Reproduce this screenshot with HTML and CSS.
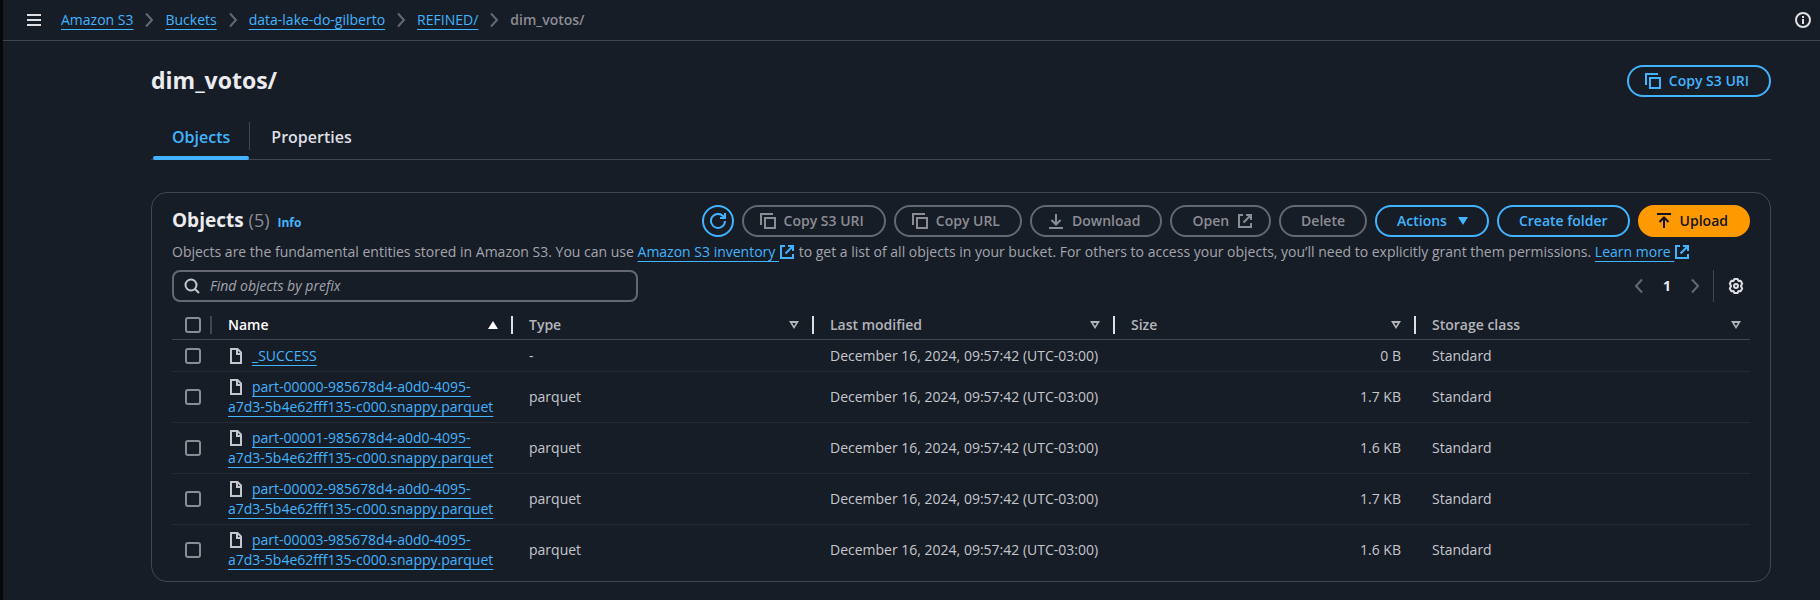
FILE: index.html
```html
<!DOCTYPE html>
<html lang="en">
<head>
<meta charset="utf-8">
<meta name="viewport" content="width=device-width, initial-scale=1">
<title>dim_votos/ - Amazon S3</title>
<link rel="stylesheet" href="styles.css">
</head>
<body>
<svg class="sprite" aria-hidden="true">
  <symbol id="copy" viewBox="0 0 16 16"><path d="M1 12V1h12M5 5h10v10H5z"/></symbol>
  <symbol id="external" viewBox="0 0 16 16"><path d="M6 2H2v12h12v-4M9 2h5v5M14 2 6.500 9.500"/></symbol>
  <symbol id="refresh" viewBox="0 0 16 16"><path d="M10 5h5V0M15 8a7 7 0 1 1-2-5l2 2"/></symbol>
  <symbol id="download" viewBox="0 0 16 16"><path d="M1 15h14M8 1v10M3.500 7 8 11.500 12.500 7"/></symbol>
  <symbol id="upload" viewBox="0 0 16 16"><path d="M1 1h14M8 15V5M3.500 9 8 4.500 12.500 9"/></symbol>
  <symbol id="file" viewBox="0 0 16 16"><path d="M3 1h6.500L13 4.500V15H3zM9 1v5h4"/></symbol>
  <symbol id="next" viewBox="0 0 16 16"><path d="M5 1.500 11 8 5 14.500"/></symbol>
  <symbol id="prev" viewBox="0 0 16 16"><path d="M11 1.500 5 8 11 14.500"/></symbol>
  <symbol id="down" viewBox="0 0 16 16"><path d="M3 4h10l-5 8z"/></symbol>
  <symbol id="sort" viewBox="0 0 16 16"><path fill-rule="evenodd" d="M3 4h10l-5 8zM6.200 6 8 9l1.800-3z"/></symbol>
</svg>

<header class="topbar">
  <button class="icon-button" aria-label="Open navigation"><svg class="icon"><path d="M1 3h14M1 8h14M1 13h14"/></svg></button>
  <nav class="crumbs" aria-label="Breadcrumbs">
    <a href="#">Amazon S3</a><svg class="icon"><use href="#next"/></svg>
    <a href="#">Buckets</a><svg class="icon"><use href="#next"/></svg>
    <a href="#">data-lake-do-gilberto</a><svg class="icon"><use href="#next"/></svg>
    <a href="#">REFINED/</a><svg class="icon"><use href="#next"/></svg>
    <span class="current">dim_votos/</span>
  </nav>
  <button class="icon-button" aria-label="Open info panel"><svg class="icon"><circle cx="8" cy="8" r="7"/><path d="M8 7v5M8 4v2"/></svg></button>
</header>

<main class="content">
  <div class="title-row">
    <h1>dim_votos/</h1>
    <button class="button"><svg class="icon"><use href="#copy"/></svg>Copy S3 URI</button>
  </div>

  <div class="tabs" role="tablist">
    <button class="tab active" role="tab" aria-selected="true">Objects</button>
    <button class="tab" role="tab" aria-selected="false">Properties</button>
  </div>

  <section class="panel">
    <div class="panel-head">
      <h2>Objects <span class="count">(5)</span> <a class="info" href="#">Info</a></h2>
      <div class="actions">
        <button class="button round" aria-label="Refresh"><svg class="icon"><use href="#refresh"/></svg></button>
        <button class="button" disabled><svg class="icon"><use href="#copy"/></svg>Copy S3 URI</button>
        <button class="button" disabled><svg class="icon"><use href="#copy"/></svg>Copy URL</button>
        <button class="button" disabled><svg class="icon"><use href="#download"/></svg>Download</button>
        <button class="button icon-end" disabled>Open<svg class="icon"><use href="#external"/></svg></button>
        <button class="button" disabled>Delete</button>
        <button class="button icon-end">Actions<svg class="icon filled"><use href="#down"/></svg></button>
        <button class="button">Create folder</button>
        <button class="button primary"><svg class="icon"><use href="#upload"/></svg>Upload</button>
      </div>
    </div>
    <p class="description">Objects are the fundamental entities stored in Amazon S3. You can use <a href="#">Amazon S3 inventory <svg class="icon"><use href="#external"/></svg></a> to get a list of all objects in your bucket. For others to access your objects, you’ll need to explicitly grant them permissions. <a href="#">Learn more <svg class="icon"><use href="#external"/></svg></a></p>
    <div class="tools">
      <label class="search"><svg class="icon"><circle cx="7" cy="7" r="5.500"/><path d="m11 11 4 4"/></svg><input type="search" placeholder="Find objects by prefix" aria-label="Find objects by prefix"></label>
      <div class="pager">
        <button class="icon-button" disabled aria-label="Previous page"><svg class="icon"><use href="#prev"/></svg></button>
        <button class="page">1</button>
        <button class="icon-button" disabled aria-label="Next page"><svg class="icon"><use href="#next"/></svg></button>
      </div>
      <div class="settings"><button class="icon-button" aria-label="Preferences"><svg class="icon gear"><path d="M6.400 1h3.200l.8 1.900 2.200-.2 1.600 2.700L13 8l1.200 2.600-1.600 2.700-2.200-.2-.8 1.900H6.400l-.8-1.900-2.200.2-1.600-2.700L3 8 1.800 5.400l1.600-2.700 2.200.2z"/><circle cx="8" cy="8" r="2"/></svg></button></div>
    </div>

    <table class="objects">
      <colgroup><col class="col-select"><col class="col-data"><col class="col-data"><col class="col-data"><col class="col-data"><col></colgroup>
      <thead>
        <tr>
          <th><input type="checkbox" aria-label="Select all objects"></th>
          <th class="sorted"><div class="head">Name<svg class="icon filled"><path d="M3 12h10L8 4z"/></svg></div></th>
          <th><div class="head">Type<svg class="icon filled"><use href="#sort"/></svg></div></th>
          <th><div class="head">Last modified<svg class="icon filled"><use href="#sort"/></svg></div></th>
          <th><div class="head">Size<svg class="icon filled"><use href="#sort"/></svg></div></th>
          <th><div class="head">Storage class<svg class="icon filled"><use href="#sort"/></svg></div></th>
        </tr>
      </thead>
      <tbody>
        <tr><td><input type="checkbox" aria-label="Select _SUCCESS"></td><td><svg class="icon"><use href="#file"/></svg><a href="#">_SUCCESS</a></td><td>-</td><td>December 16, 2024, 09:57:42 (UTC-03:00)</td><td class="size">0 B</td><td>Standard</td></tr>
        <tr><td><input type="checkbox" aria-label="Select part-00000"></td><td><svg class="icon"><use href="#file"/></svg><a href="#">part-00000-985678d4-a0d0-4095-<wbr>a7d3-5b4e62fff135-c000.snappy.parquet</a></td><td>parquet</td><td>December 16, 2024, 09:57:42 (UTC-03:00)</td><td class="size">1.7 KB</td><td>Standard</td></tr>
        <tr><td><input type="checkbox" aria-label="Select part-00001"></td><td><svg class="icon"><use href="#file"/></svg><a href="#">part-00001-985678d4-a0d0-4095-<wbr>a7d3-5b4e62fff135-c000.snappy.parquet</a></td><td>parquet</td><td>December 16, 2024, 09:57:42 (UTC-03:00)</td><td class="size">1.6 KB</td><td>Standard</td></tr>
        <tr><td><input type="checkbox" aria-label="Select part-00002"></td><td><svg class="icon"><use href="#file"/></svg><a href="#">part-00002-985678d4-a0d0-4095-<wbr>a7d3-5b4e62fff135-c000.snappy.parquet</a></td><td>parquet</td><td>December 16, 2024, 09:57:42 (UTC-03:00)</td><td class="size">1.7 KB</td><td>Standard</td></tr>
        <tr><td><input type="checkbox" aria-label="Select part-00003"></td><td><svg class="icon"><use href="#file"/></svg><a href="#">part-00003-985678d4-a0d0-4095-<wbr>a7d3-5b4e62fff135-c000.snappy.parquet</a></td><td>parquet</td><td>December 16, 2024, 09:57:42 (UTC-03:00)</td><td class="size">1.6 KB</td><td>Standard</td></tr>
      </tbody>
    </table>
  </section>
</main>
</body>
</html>
```
FILE: styles.css
```css
:root {
  --bg: #161d26;
  --line: #424650;
  --row-line: #232b37;
  --text: #c6c6cd;
  --muted: #a4a4ad;
  --disabled: #8c8c94;
  --control: #656871;
  --bright: #ebebf0;
  --blue: #42b4ff;
}

* { box-sizing: border-box; }

body {
  margin: 0;
  min-height: 100vh;
  border-left: 3px solid #06080c;
  background: var(--bg);
  color: var(--text);
  font: 14px/20px "Open Sans", "Noto Sans", sans-serif;
}

button, input { font: inherit; color: inherit; }
button { margin: 0; padding: 0; border: 0; background: none; }

a {
  color: var(--blue);
  text-decoration: underline 1px;
  text-underline-offset: 4px;
  text-decoration-skip-ink: none;
}

.sprite { display: none; }

.icon {
  flex: none;
  width: 16px;
  height: 16px;
  fill: none;
  stroke: currentColor;
  stroke-width: 2;
}
.filled { fill: currentColor; stroke: none; }
.gear { stroke-linejoin: round; }

.icon-button { display: flex; padding: 2px; }
.icon-button:disabled { color: var(--control); }

.topbar {
  display: flex;
  align-items: center;
  height: 41px;
  padding: 0 7px 1px 21px;
  border-bottom: 1px solid var(--line);
  color: #dedee3;
}
.crumbs {
  display: flex;
  flex: 1;
  align-items: center;
  gap: 8px;
  margin-left: 17px;
}
.crumbs .icon { color: var(--control); }
.crumbs .current { color: var(--disabled); font-weight: 600; }

.content { padding: 24px 49px 16px 148px; }

.title-row {
  display: flex;
  align-items: center;
  justify-content: space-between;
}
h1, h2 { margin: 0; color: var(--bright); font-weight: 700; }
h1 { font-size: 23px; line-height: 30px; padding-bottom: 2px; }

.button {
  display: flex;
  align-items: center;
  gap: 8px;
  height: 32px;
  padding: 0 20px;
  border: 2px solid currentColor;
  border-radius: 16px;
  color: var(--blue);
  font-weight: 600;
  white-space: nowrap;
}
.button .icon { margin-left: -4px; }
.button.icon-end .icon { margin-right: -4px; margin-left: 0; }
.button:disabled { border-color: var(--control); color: var(--disabled); }
.button.round { padding: 0 6px; }
.button.round .icon { margin: 0; }
.button.primary { border-color: #ff9900; background: #ff9900; color: #0f141a; }

.tabs {
  display: flex;
  margin-top: 20px;
  border-bottom: 1px solid var(--line);
}
.tab {
  position: relative;
  height: 42px;
  padding: 0 20px 3px 21px;
  color: #dedee3;
  font-size: 16px;
  font-weight: 600;
}
.active { color: var(--blue); }
.active::before {
  content: "";
  position: absolute;
  top: 5px;
  right: 0;
  height: 28px;
  border-right: 1px solid var(--line);
}
.active::after {
  content: "";
  position: absolute;
  right: 1px;
  bottom: -1px;
  left: 2px;
  height: 4px;
  border-radius: 2px;
  background: var(--blue);
}

.panel {
  margin-top: 32px;
  padding: 12px 20px 5px;
  border: 1px solid var(--line);
  border-radius: 16px;
}
.panel-head {
  display: flex;
  justify-content: space-between;
  height: 32px;
}
h2 { font-size: 19px; line-height: 30px; }
.count { color: var(--disabled); font-size: 18px; font-weight: 400; }
.info { margin-left: 3px; font-size: 12px; text-decoration: none; }
.actions { display: flex; gap: 8px; }

.description { margin: 5px 0 8px; color: var(--muted); }
.description .icon { vertical-align: -3px; }

.tools { display: flex; align-items: center; }
.search {
  display: flex;
  align-items: center;
  gap: 10px;
  width: 466px;
  height: 32px;
  padding: 0 10px;
  border: 2px solid var(--control);
  border-radius: 8px;
}
.search input {
  flex: 1;
  padding: 0;
  border: 0;
  outline: 0;
  background: none;
}
.search input::placeholder { color: var(--muted); font-style: italic; opacity: 1; }
.pager {
  display: flex;
  align-items: center;
  margin-left: auto;
}
.page { width: 36px; color: var(--bright); font-weight: 700; }
.settings {
  display: flex;
  align-items: center;
  height: 32px;
  margin-left: 8px;
  padding: 0 4px 0 12px;
  border-left: 1px solid var(--line);
  color: #dedee3;
}

.objects {
  width: 100%;
  margin-top: 8px;
  border-collapse: separate;
  border-spacing: 0;
  table-layout: fixed;
}
.col-select { width: 40px; }
.col-data { width: 301px; }
.objects th, .objects td {
  height: 32px;
  padding: 5px 15px 5px 16px;
  border-bottom: 1px solid var(--row-line);
  text-align: left;
}
.objects tr > :first-child { padding: 0 0 0 13px; }
.objects th {
  height: 30px;
  padding: 5px 12px 4px 16px;
  border-color: var(--line);
  color: #b4b4bb;
  font-weight: 600;
}
.objects th:last-child { padding-right: 6px; }
.objects .sorted { color: #fff; }
.head { position: relative; display: flex; justify-content: space-between; align-items: center; }
.head::before {
  content: "";
  position: absolute;
  top: 1px;
  left: -18px;
  height: 18px;
  border-left: 2px solid #dedee3;
}
.sorted .head::before { border-color: var(--line); }
.objects tbody tr:last-child td { border-color: transparent; }
.objects td .icon { margin-right: 8px; vertical-align: -3px; }
.objects .size { text-align: right; }
.objects input {
  display: block;
  appearance: none;
  width: 16px;
  height: 16px;
  margin: 0;
  border: 2px solid var(--disabled);
  border-radius: 3px;
}
```
